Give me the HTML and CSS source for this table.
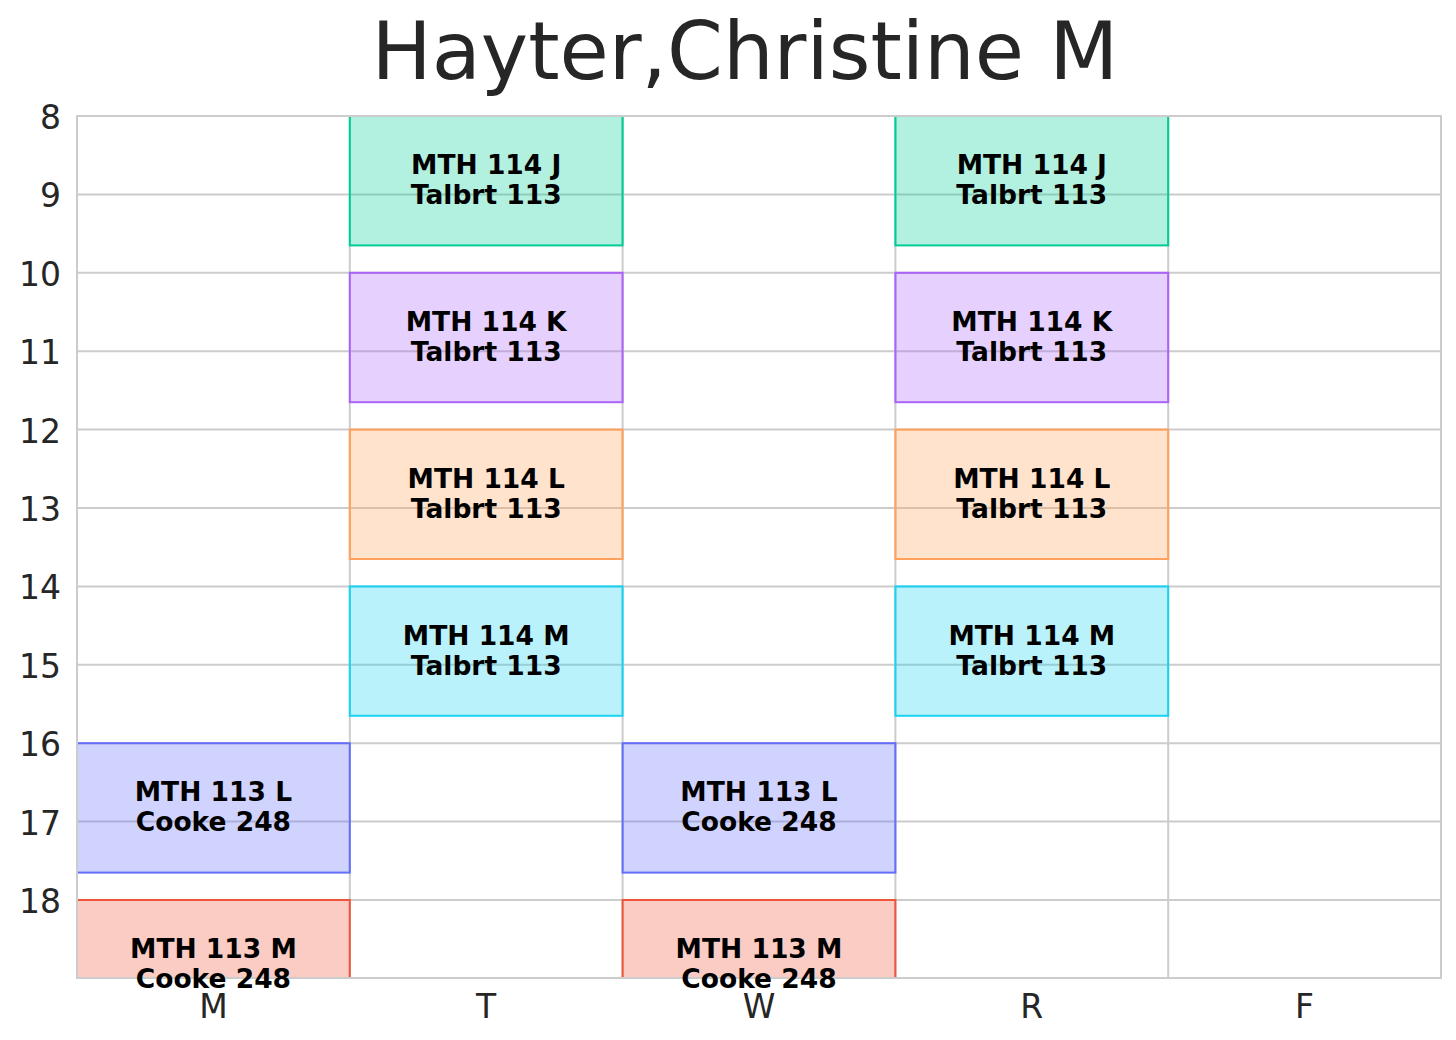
FILE: index.html
```html
<!DOCTYPE html>
<html>
<head>
<meta charset="utf-8">
<link rel="stylesheet" href="styles.css">
<title>Schedule</title>
</head>
<body>
<div class="figure">
<svg class="chart" width="1456" height="1040" viewBox="0 0 1456 1040" xmlns="http://www.w3.org/2000/svg">
  <defs>
    <clipPath id="plotclip"><rect x="77" y="116" width="1364" height="862"/></clipPath>
  </defs>
  <text class="title" x="745" y="79" text-anchor="middle">Hayter,Christine M</text>

  <rect class="plotbg" x="77" y="116" width="1364" height="862"/>
  <g class="grid">
    <line x1="77" x2="1441" y1="194.4" y2="194.4"/>
    <line x1="77" x2="1441" y1="272.8" y2="272.8"/>
    <line x1="77" x2="1441" y1="351.2" y2="351.2"/>
    <line x1="77" x2="1441" y1="429.6" y2="429.6"/>
    <line x1="77" x2="1441" y1="508" y2="508"/>
    <line x1="77" x2="1441" y1="586.4" y2="586.4"/>
    <line x1="77" x2="1441" y1="664.8" y2="664.8"/>
    <line x1="77" x2="1441" y1="743.2" y2="743.2"/>
    <line x1="77" x2="1441" y1="821.6" y2="821.6"/>
    <line x1="77" x2="1441" y1="900" y2="900"/>
    <line x1="349.8" x2="349.8" y1="116" y2="978"/>
    <line x1="622.6" x2="622.6" y1="116" y2="978"/>
    <line x1="895.4" x2="895.4" y1="116" y2="978"/>
    <line x1="1168.2" x2="1168.2" y1="116" y2="978"/>
  </g>

  <g clip-path="url(#plotclip)">
    <rect class="blk green" x="349.8" y="116" width="272.8" height="129.4"/>
    <rect class="blk green" x="895.4" y="116" width="272.8" height="129.4"/>
    <rect class="blk purple" x="349.8" y="272.8" width="272.8" height="129.4"/>
    <rect class="blk purple" x="895.4" y="272.8" width="272.8" height="129.4"/>
    <rect class="blk orange" x="349.8" y="429.6" width="272.8" height="129.4"/>
    <rect class="blk orange" x="895.4" y="429.6" width="272.8" height="129.4"/>
    <rect class="blk cyan" x="349.8" y="586.4" width="272.8" height="129.4"/>
    <rect class="blk cyan" x="895.4" y="586.4" width="272.8" height="129.4"/>
    <rect class="blk blue" x="77" y="743.2" width="272.8" height="129.4"/>
    <rect class="blk blue" x="622.6" y="743.2" width="272.8" height="129.4"/>
    <rect class="blk red" x="77" y="900" width="272.8" height="129.4"/>
    <rect class="blk red" x="622.6" y="900" width="272.8" height="129.4"/>
  </g>

  <rect class="frame" x="77" y="116" width="1364" height="862"/>

  <g class="label" text-anchor="middle">
    <text x="486.2" y="174.2">MTH 114 J</text><text x="486.2" y="204.2">Talbrt 113</text>
    <text x="1031.8" y="174.2">MTH 114 J</text><text x="1031.8" y="204.2">Talbrt 113</text>
    <text x="486.2" y="331">MTH 114 K</text><text x="486.2" y="361">Talbrt 113</text>
    <text x="1031.8" y="331">MTH 114 K</text><text x="1031.8" y="361">Talbrt 113</text>
    <text x="486.2" y="487.8">MTH 114 L</text><text x="486.2" y="517.8">Talbrt 113</text>
    <text x="1031.8" y="487.8">MTH 114 L</text><text x="1031.8" y="517.8">Talbrt 113</text>
    <text x="486.2" y="644.6">MTH 114 M</text><text x="486.2" y="674.6">Talbrt 113</text>
    <text x="1031.8" y="644.6">MTH 114 M</text><text x="1031.8" y="674.6">Talbrt 113</text>
    <text x="213.4" y="801.4">MTH 113 L</text><text x="213.4" y="831.4">Cooke 248</text>
    <text x="759" y="801.4">MTH 113 L</text><text x="759" y="831.4">Cooke 248</text>
    <text x="213.4" y="958.2">MTH 113 M</text><text x="213.4" y="988.2">Cooke 248</text>
    <text x="759" y="958.2">MTH 113 M</text><text x="759" y="988.2">Cooke 248</text>
  </g>

  <g class="tick" text-anchor="end">
    <text x="61" y="129">8</text>
    <text x="61" y="207.4">9</text>
    <text x="61" y="285.8">10</text>
    <text x="61" y="364.2">11</text>
    <text x="61" y="442.6">12</text>
    <text x="61" y="521">13</text>
    <text x="61" y="599.4">14</text>
    <text x="61" y="677.8">15</text>
    <text x="61" y="756.2">16</text>
    <text x="61" y="834.6">17</text>
    <text x="61" y="913">18</text>
  </g>
  <g class="tick" text-anchor="middle">
    <text x="213.4" y="1018">M</text>
    <text x="486.2" y="1018">T</text>
    <text x="759" y="1018">W</text>
    <text x="1031.8" y="1018">R</text>
    <text x="1304.6" y="1018">F</text>
  </g>
</svg>
</div>
</body>
</html>
```
FILE: styles.css
```css
html, body {
  margin: 0;
  padding: 0;
  background: #ffffff;
}
.figure {
  width: 1456px;
  height: 1040px;
  overflow: hidden;
}
.chart {
  display: block;
  font-family: "DejaVu Sans", "Liberation Sans", sans-serif;
}
.title {
  font-size: 80px;
  fill: #262626;
}
.plotbg {
  fill: #ffffff;
}
.grid line {
  stroke: #cccccc;
  stroke-width: 2;
}
.frame {
  fill: none;
  stroke: #cccccc;
  stroke-width: 2;
}
.blk {
  stroke-width: 2;
}
.green { fill: rgba(0, 204, 150, 0.3); stroke: #00cc96; }
.purple { fill: rgba(171, 99, 250, 0.3); stroke: #ab63fa; }
.orange { fill: rgba(255, 161, 90, 0.3); stroke: #ffa15a; }
.cyan { fill: rgba(25, 211, 243, 0.3); stroke: #19d3f3; }
.blue { fill: rgba(99, 110, 250, 0.3); stroke: #636efa; }
.red { fill: rgba(239, 85, 59, 0.3); stroke: #ef553b; }
.label text {
  font-size: 26.5px;
  font-weight: bold;
  fill: #000000;
}
.tick text {
  font-size: 33px;
  fill: #262626;
}
```
